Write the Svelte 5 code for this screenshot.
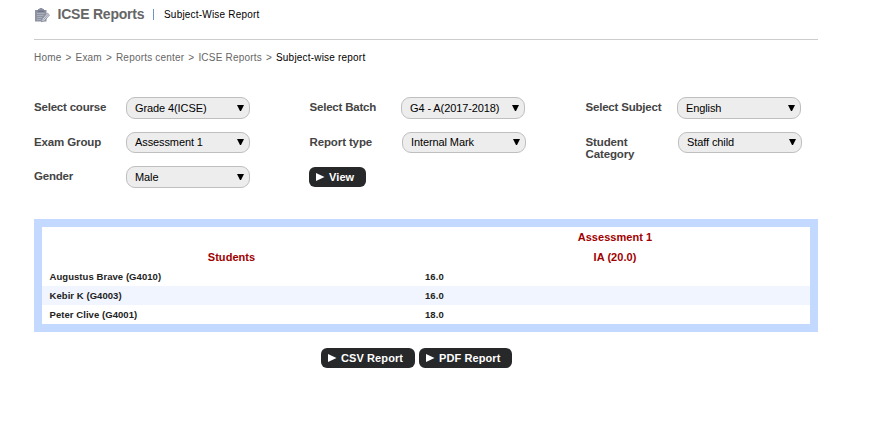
<script>
  const filters = [
    [
      { label: 'Select course', value: 'Grade 4(ICSE)' },
      { label: 'Select Batch', value: 'G4 - A(2017-2018)' },
      { label: 'Select Subject', value: 'English' }
    ],
    [
      { label: 'Exam Group', value: 'Assessment 1' },
      { label: 'Report type', value: 'Internal Mark' },
      { label: 'Student Category', value: 'Staff child' }
    ],
    [{ label: 'Gender', value: 'Male' }]
  ];
  const crumbs = ['Home', 'Exam', 'Reports center', 'ICSE Reports'];
  const students = [
    { name: 'Augustus Brave (G4010)', mark: '16.0' },
    { name: 'Kebir K (G4003)', mark: '16.0' },
    { name: 'Peter Clive (G4001)', mark: '18.0' }
  ];
</script>

{#snippet action(text, kind)}
  <button class="action {kind}">
    <svg width="9" height="8" viewBox="0 0 9 8"><path d="M0 0L8.5 4L0 8z" fill="#fff" /></svg>
    <span>{text}</span>
  </button>
{/snippet}

<main>
  <header>
    <svg class="icon" width="15" height="15" viewBox="0 0 15 15">
      <path d="M0 2h3V1h1.500V0h3v1H9v1h2.500v11.500H0z" fill="#8e93a3" />
      <path d="M2.500 2.500h7v1.300h-7z" fill="#6f7486" />
      <path d="M2 5.500h7.500M2 7.500h6.500M2 9.500h5M2 11.500h4" stroke="#b3b7c3" stroke-width=".8" />
      <path d="M6.500 13.800L7.300 10.800L12.300 5L14.500 7L9.500 12.800z" fill="#d5d8df" stroke="#858a9b" stroke-width=".8" />
      <path d="M8.500 11.700L13.200 6.300" stroke="#8f94a4" stroke-width=".8" />
    </svg>
    <h1>ICSE Reports</h1>
    <span class="bar"></span>
    <span class="subtitle">Subject-Wise Report</span>
  </header>

  <nav>
    {#each crumbs as crumb}<span>{crumb}</span><i>&gt;</i>{/each}<b>Subject-wise report</b>
  </nav>

  <form>
    {#each filters as row, r}
      <div class="row r{r}">
        {#each row as field, c}
          <div class="field c{c}">
            <span class="label">{field.label}</span>
            <div class="select">
              <span>{field.value}</span>
              <svg width="7" height="6" viewBox="0 0 7 6"><path d="M0 0h7L4 6H3z" /></svg>
            </div>
          </div>
        {/each}
        {#if r === 2}{@render action('View', 'view')}{/if}
      </div>
    {/each}
  </form>

  <section class="report">
    <div class="head"><span></span><span>Assessment 1</span></div>
    <div class="head"><span>Students</span><span>IA (20.0)</span></div>
    {#each students as s, i}
      <div class="line" class:alt={i === 1}><span>{s.name}</span><span>{s.mark}</span></div>
    {/each}
  </section>

  <footer>
    {@render action('CSV Report', 'csv')}
    {@render action('PDF Report', 'pdf')}
  </footer>
</main>

<style>
  :global(body) { background: #fff; }
  main {
    box-sizing: border-box;
    width: 881px;
    height: 443px;
    padding: 0 63px 0 34px;
    overflow: hidden;
    font-family: 'Liberation Sans', Arial, sans-serif;
    white-space: nowrap;
  }
  header {
    display: flex;
    box-sizing: border-box;
    height: 40px;
    border-bottom: 1px solid #ccc;
  }
  .icon { margin: 8px 0 0 1px; width: 15px; }
  h1 {
    margin: 5px 0 0 7.500px;
    width: 87.500px;
    font-size: 14px;
    line-height: 18px;
    color: #666;
    letter-spacing: -0.22px;
  }
  .bar { width: 1px; height: 11px; margin: 9px 0 0 8px; background: #6f93c8; }
  .subtitle { margin: 8px 0 0 10px; font-size: 10px; line-height: 14px; letter-spacing: .2px; color: #000; }
  nav {
    display: flex;
    height: 57px;
    box-sizing: border-box;
    padding-top: 11px;
    font-size: 10px;
    line-height: 14px;
    letter-spacing: .2px;
    color: #666;
  }
  nav i { font-style: normal; margin: 0 4px; }
  nav b { font-weight: 400; color: #000; }
  form { height: 122px; }
  .row { display: flex; height: 35px; }
  .r1 { height: 34px; }
  .field { display: flex; width: 275px; flex: none; }
  .field.c1 { width: 276px; }
  .field.c2 { width: 217px; }
  .label {
    width: 92px;
    height: 21px;
    padding-top: 4px;
    box-sizing: border-box;
    font-size: 11.500px;
    line-height: 12px;
    font-weight: 700;
    color: #444;
    letter-spacing: -.2px;
    white-space: normal;
  }
  .r1 .label { letter-spacing: -.12px; }
  .c1 .label, .c2 .label { padding-left: .500px; }
  .r1 .c1 .label, .r1 .c2 .label { width: 93px; }
  .r1 .c2 .label { padding-right: 20px; }
  .select {
    display: flex;
    align-items: center;
    box-sizing: border-box;
    width: 124px;
    height: 22px;
    padding: 0 5px 0 8px;
    border: 1px solid #bfbfbf;
    border-radius: 9px;
    background: #ededed;
    font-size: 11px;
    letter-spacing: -.1px;
    color: #000;
  }
  .r1 .select { height: 21px; padding-bottom: 1px; }
  .select span { flex: 1; }
  .select svg { flex: none; }
  .action {
    display: flex;
    align-items: center;
    box-sizing: border-box;
    height: 20px;
    margin: 0;
    padding: 0 0 0 7px;
    border: 0;
    border-radius: 6px;
    background: #272829;
    color: #fff;
    font: 700 11px 'Liberation Sans', Arial, sans-serif;
    letter-spacing: .1px;
  }
  .action svg { margin-right: 4px; flex: none; }
  .view { width: 57px; margin-top: 1px; }
  .csv { width: 94px; }
  .pdf { width: 93px; }
  .report {
    box-sizing: border-box;
    height: 113px;
    border: 8px solid #c3d9ff;
    font-weight: 700;
  }
  .head, .line { display: grid; grid-template-columns: 379px 389px; }
  .head { height: 20px; line-height: 20px; font-size: 11px; letter-spacing: .05px; text-align: center; color: #a00000; }
  .head span + span { padding-right: 1px; }
  .line { height: 19px; line-height: 19px; font-size: 9.500px; letter-spacing: .06px; color: #222; }
  .line span { padding-left: 7.500px; }
  .line span + span { padding-left: 4px; }
  .alt { background: #f0f5ff; }
  footer { display: flex; gap: 4px; padding: 16px 0 0 287px; }
</style>
